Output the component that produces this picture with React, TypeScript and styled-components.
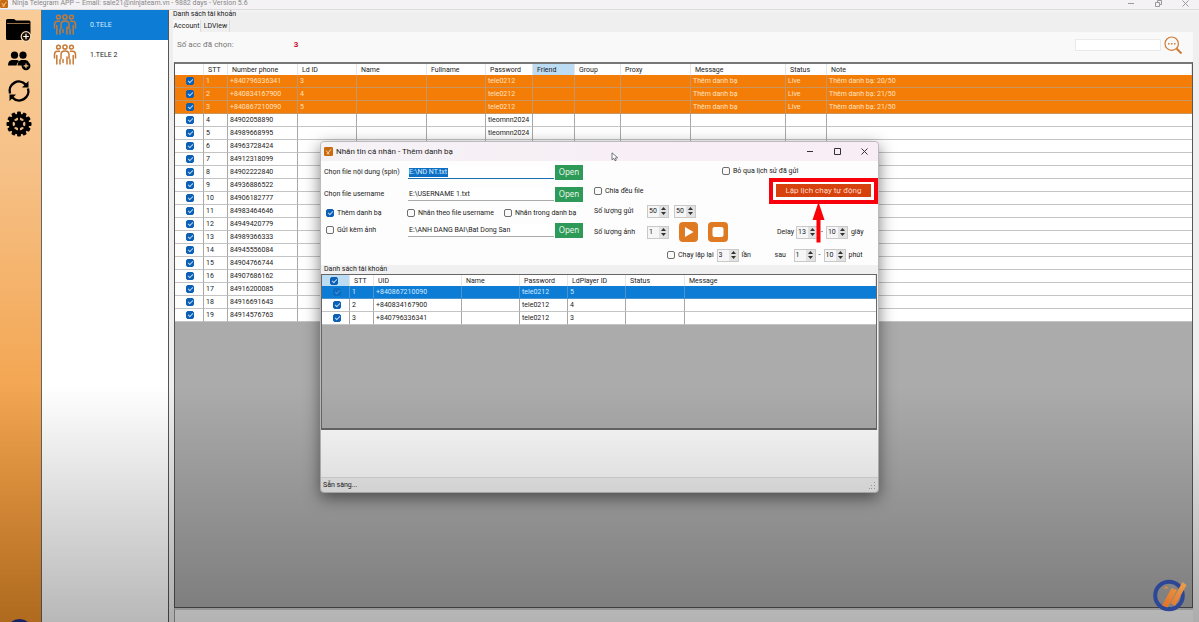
import React from "react";
import styled, { createGlobalStyle, css } from "styled-components";

const GlobalStyle = createGlobalStyle`
  * { box-sizing: border-box; }
  html, body, #root { height: 100%; }
  body {
    margin: 0;
    overflow: hidden;
    font: 7px/10px Roboto, "Liberation Sans", sans-serif;
    color: #222;
    background: #efefef;
  }
  button, input { font: inherit; color: inherit; margin: 0; padding: 0; border: 0; }
  button { background: none; cursor: pointer; }
  svg { display: block; }
`;

/* ---------- shared controls ---------- */

const Tick = styled.input.attrs({ type: "checkbox" })<{ $dim?: boolean }>`
  appearance: none;
  position: relative;
  display: block;
  flex: none;
  width: 8px;
  height: 8px;
  border: 1px solid #6e6e6e;
  border-radius: 2px;
  background: #fafafa;

  &:checked {
    background: ${(p) => (p.$dim ? "#0c6cc0" : "#0b5fb4")};
    border-color: ${(p) => (p.$dim ? "#0c6cc0" : "#0b5fb4")};
  }
  &:checked::after {
    content: "";
    position: absolute;
    left: 1px;
    top: 1px;
    width: 4px;
    height: 2px;
    border-left: 1px solid ${(p) => (p.$dim ? "#3f93d8" : "#b5d5f0")};
    border-bottom: 1px solid ${(p) => (p.$dim ? "#3f93d8" : "#b5d5f0")};
    transform: rotate(-45deg);
  }
`;

const CheckLabel = styled.label<{ $indent?: boolean }>`
  display: flex;
  align-items: center;
  gap: 3px;
  padding-left: ${(p) => (p.$indent ? 2 : 0)}px;
  white-space: nowrap;
`;

const SpinBox = styled.span`
  display: flex;
  width: 22px;
  height: 13px;
  border: 1px solid #c9c9c9;
  background: #f6f6f6;
`;

const SpinInput = styled.input.attrs({ type: "number" })`
  appearance: textfield;
  flex: 1;
  min-width: 0;
  width: 10px;
  padding-left: 1px;
  background: transparent;
  &::-webkit-inner-spin-button { appearance: none; margin: 0; }
`;

const SpinButtons = styled.span`
  display: flex;
  flex-direction: column;
  width: 9px;
  background: #e2e2e2;
`;

const SpinButton = styled.button.attrs({ type: "button" })`
  flex: 1;
  display: grid;
  place-items: center;
`;

function Spinner({ value, label }: { value: number; label: string }) {
  return (
    <SpinBox>
      <SpinInput defaultValue={value} aria-label={label} />
      <SpinButtons>
        <SpinButton aria-label="Tăng">
          <svg width="5" height="3" viewBox="0 0 5 3"><path d="M2.5 0 5 3H0z" fill="#333" /></svg>
        </SpinButton>
        <SpinButton aria-label="Giảm">
          <svg width="5" height="3" viewBox="0 0 5 3"><path d="M2.5 3 0 0h5z" fill="#333" /></svg>
        </SpinButton>
      </SpinButtons>
    </SpinBox>
  );
}

/* ---------- drawings ---------- */

const AppIcon = ({ size }: { size: number }) => (
  <svg width={size} height={size} viewBox="0 0 10 10">
    <rect width="10" height="10" rx="1.5" fill="#c86a12" />
    <path d="M2.300 4 4.600 6.600 7.800 2.600M3 7.500h3" stroke="#ffdca8" strokeWidth="1.100" fill="none" />
  </svg>
);

const FolderIcon = () => (
  <svg width="26" height="25" viewBox="0 0 26 25">
    <path d="M0 2.500Q0 1 1.500 1H8l2 1.500h13q1.500 0 1.500 1.500v16.500q0 1.500-1.500 1.500H1.500Q0 22 0 20.500z" fill="#000" />
    <path d="M1 5.500h22.500" stroke="#a87c4c" strokeWidth=".9" />
    <circle cx="20" cy="18.500" r="4.800" fill="#1a1006" stroke="#f6dcb8" strokeWidth="1.200" />
    <path d="M20 15.700v5.600M17.200 18.500h5.600" stroke="#fff" strokeWidth="1.200" />
  </svg>
);

const PeopleIcon = () => (
  <svg width="23" height="20" viewBox="0 0 23 20">
    <circle cx="6.500" cy="4.200" r="3.600" />
    <circle cx="15" cy="4.200" r="3.600" />
    <path d="M0 14.500Q0 9.200 4 8.900h5q1.500.3 2 1.500-2.300 1.600-2.500 4.100z" />
    <path d="M9.500 14.500q.3-5 4-5.600h4q2.500.3 3.300 2.300-5.300-.8-6.300 3.300z" />
    <circle cx="18" cy="14.800" r="4.400" />
    <path d="M18 12.400v4.800M15.600 14.800h4.800" stroke="#f6c78e" strokeWidth="1.200" />
  </svg>
);

const RefreshIcon = () => (
  <svg width="24" height="24" viewBox="0 0 24 24" fill="none" stroke="#000" strokeWidth="2.400">
    <path d="M3 14.500A9.300 9.300 0 0 1 18.500 5.300M21 9.500a9.300 9.300 0 0 1-15.500 9.200" />
    <path d="M21.500 2v6.500h-6.500zM2.500 22v-6.500h6.500z" fill="#000" stroke="none" />
  </svg>
);

const GearIcon = () => (
  <svg width="26" height="26" viewBox="-13 -13 26 26">
    {[0, 30, 60, 90, 120, 150].map((a) => (
      <rect key={a} x="-1.900" y="-12.500" width="3.800" height="25" rx="1" transform={`rotate(${a})`} />
    ))}
    <circle r="10.300" />
    <circle r="5.200" fill="none" stroke="#e8b880" strokeWidth="2.400" />
    {[0, 60, 120].map((a) => (
      <path key={a} d="M0-8V8" stroke="#000" strokeWidth="2" transform={`rotate(${a})`} />
    ))}
    <circle r="2.200" />
  </svg>
);

const TeamIcon = () => (
  <svg width="24" height="22" viewBox="0 0 24 22" fill="none" stroke="#c77a35" strokeWidth="1.500" strokeLinecap="round">
    <circle cx="5.500" cy="3.200" r="1.900" />
    <circle cx="12" cy="3" r="2.100" />
    <circle cx="18.500" cy="3.200" r="1.900" />
    <path d="M1.500 14v-3.500Q1.500 7.300 4.500 7.300h2M3.800 11.500v8.500M7 15.500v4.500M22.500 14v-3.500q0-3.200-3-3.200h-2M20.200 11.500v8.500M17 15.500v4.500" />
    <path d="M8 14.500v-4Q8 7 12 7t4 3.500v4M10 15.500v3M14 13v7" />
  </svg>
);

const SearchIcon = () => (
  <svg width="19" height="19" viewBox="0 0 19 19" fill="none" stroke="#cf7a35">
    <circle cx="7.700" cy="7.700" r="6.700" strokeWidth="1.200" />
    <path d="m12.500 12.500 5 5" strokeWidth="2" />
    <path d="M4 7.700h1.500M7 7.700h1.500M10 7.700h1.500" strokeWidth="1.500" />
  </svg>
);

const NinjaLogo = () => (
  <svg width="34" height="33" viewBox="0 0 34 33">
    <defs>
      <linearGradient id="blade" x1="0" y1="1" x2="1" y2="0">
        <stop offset="0" stopColor="#e07028" />
        <stop offset="1" stopColor="#eba04e" />
      </linearGradient>
    </defs>
    <circle cx="16" cy="16.500" r="13.800" fill="none" stroke="#2d4796" strokeWidth="4" />
    <path d="m9 26.500 9.500-17.500 5.500 2-9.500 17.500zM17.500 24 29.500 3l4 3-11.500 21z" fill="url(#blade)" />
    <path d="m10.500 9.500 3-2.500 2 2.500z" fill="#e58a3c" />
  </svg>
);

/* ---------- main window ---------- */

const Shell = styled.div`
  position: relative;
  height: 100%;
  display: flex;
  flex-direction: column;
`;

const TitleBar = styled.header`
  flex: none;
  display: flex;
  align-items: flex-start;
  gap: 4px;
  height: 10px;
  overflow: hidden;
  background: #f4f2f4;
  border-bottom: 1px solid #dcdcdc;
  color: #8a8888;
  line-height: 7px;
`;

const WindowButtons = styled.div<{ $muted?: boolean }>`
  display: flex;
  align-items: center;
  gap: 20px;
  margin-left: auto;
  padding-right: 10px;
  color: ${(p) => (p.$muted ? "#999" : "#333")};
`;

function WindowControls({ maximised }: { maximised?: boolean }) {
  return (
    <WindowButtons $muted={maximised}>
      <button type="button" aria-label="Thu nhỏ"><svg width="7" height="7" viewBox="0 0 7 7" stroke="currentColor"><path d="M0 3.500h6" /></svg></button>
      <button type="button" aria-label="Phóng to">
        <svg width="7" height="7" viewBox="0 0 7 7" fill="none" stroke="currentColor">
          <path d={maximised ? "M.5 2.500h4v4h-4zM2.500 2.500v-2h4v4h-2" : "M.5.5h6v6h-6z"} />
        </svg>
      </button>
      <button type="button" aria-label="Đóng"><svg width="7" height="7" viewBox="0 0 7 7" stroke="currentColor"><path d="m.5.5 6 6M6.500.5l-6 6" /></svg></button>
    </WindowButtons>
  );
}

const Body = styled.div`
  flex: 1;
  min-height: 0;
  display: flex;
`;

const Rail = styled.nav`
  position: relative;
  width: 41px;
  flex: none;
  overflow: hidden;
  padding: 8px 0 0 6px;
  display: flex;
  flex-direction: column;
  align-items: flex-start;
  gap: 8px;
  background: linear-gradient(#f8cc98, #f6c188 25%, #f3a652 62%, #f2932a);
`;

const RailButton = styled.button`
  width: 26px;
  display: grid;
  place-items: center;
`;

const RailBadge = styled.span`
  position: absolute;
  left: 6px;
  bottom: -24px;
  width: 27px;
  height: 27px;
  border-radius: 50%;
  background: #21308c;
`;

const Groups = styled.div`
  width: 128px;
  flex: none;
  border-left: 1px solid #666;
  border-right: 1px solid #555;
  background: #fff;
`;

const Group = styled.button<{ $active?: boolean }>`
  display: flex;
  align-items: center;
  gap: 13px;
  width: 100%;
  height: 30px;
  padding-left: 11px;
  text-align: left;
  background: ${(p) => (p.$active ? "#0c7cd5" : "#fff")};
  color: ${(p) => (p.$active ? "#d8ecff" : "#222")};
`;

const Workspace = styled.main`
  flex: 1;
  min-width: 0;
  display: flex;
  flex-direction: column;
  padding: 0 6px 0 4px;
  border-top: 2px solid #f2f2f2;
`;

const Tabs = styled.div`
  display: flex;
  height: 12px;
`;

const Tab = styled.button<{ $active?: boolean }>`
  width: ${(p) => (p.$active ? 28 : 28)}px;
  margin-right: 1px;
  background: ${(p) => (p.$active ? "#f9f9f9" : "#f0f0f0")};
  border-right: 1px solid #ddd;
`;

const SectionTitle = styled.div`
  height: 8px;
  line-height: 5px;
`;

const Toolbar = styled.div`
  display: flex;
  align-items: center;
  height: 30px;
  padding: 0 10px 4px 4px;
  font-size: 8px;
  color: #777;
  background: #f9f9f9;
`;

const Count = styled.strong`
  margin-left: 60px;
  color: #c8102e;
`;

const SearchBox = styled.input`
  width: 86px;
  height: 12px;
  margin: 0 3px 0 auto;
  background: #fff;
  border: 1px solid #eaeaea;
`;

const GridPane = styled.section`
  flex: 1;
  min-height: 0;
  margin-left: 1px;
  overflow: hidden;
  border: 1px solid #555;
  border-top-width: 2px;
  border-top-color: #777;
  background: #ababab;
`;

const BottomPane = styled.div`
  height: 14px;
  flex: none;
  margin-left: 1px;
  border-left: 1px solid #999;
  border-top: 2px solid #ccc;
  background: #f8f8f8;
`;

const Table = styled.table`
  width: 100%;
  table-layout: fixed;
  border-collapse: separate;
  border-spacing: 0;
  background: #fff;
`;

const cell = css`
  overflow: hidden;
  white-space: nowrap;
  text-align: left;
  border-right: 1px solid #a8a8a8;
`;

const Th = styled.th<{ $lit?: boolean }>`
  ${cell}
  height: 11px;
  padding: 0 0 0 4px;
  font-weight: 400;
  border-right-color: #e6e6e6;
  background: ${(p) => (p.$lit ? "#bcdcf4" : "#fff")};
`;

const Td = styled.td`
  ${cell}
  height: 13px;
  padding: 0 0 0 2px;
  border-bottom: 1px solid #c4c4c4;
  &:last-child { border-right: 0; }
`;

const Row = styled.tr<{ $tone?: "orange" | "blue" }>`
  ${(p) =>
    p.$tone &&
    css`
      color: ${p.$tone === "orange" ? "#ffe2c0" : "#d5eaff"};
      background: ${p.$tone === "orange" ? "#f47d07" : "#0c7cd5"};
      td { border-color: ${p.$tone === "orange" ? "#c99560" : "#4b93cf"}; }
    `}
`;

const TickCell = styled.div<{ $inset?: number }>`
  padding-left: ${(p) => p.$inset ?? 9}px;
`;

const mainColumns = ["", "STT", "Number phone", "Ld ID", "Name", "Fullname", "Password", "Friend", "Group", "Proxy", "Message", "Status", "Note"];
const mainWidths = [29, 24, 70, 59, 70, 59, 47, 42, 46, 70, 95, 41];

const active = [
  ["+840796336341", "3", "20/50"],
  ["+840834167900", "4", "21/50"],
  ["+840867210090", "5", "21/50"],
].map(([phone, ld, done]) => [phone, ld, "", "", "tele0212", "", "", "", "Thêm danh bạ", "Live", `Thêm danh bạ: ${done}`]);

const idle = [
  "84902058890", "84989668995", "84963728424", "84912318099", "84902222840", "84936886522",
  "84906182777", "84983464646", "84949420779", "84989366333", "84945556084", "84904766744",
  "84907686162", "84916200085", "84916691643", "84914576763",
].map((phone, i) => [phone, "", "", "", i < 2 ? "tleomnn2024" : "", "", "", "", "", "", ""]);

function Accounts() {
  return (
    <Table>
      <colgroup>
        {mainWidths.map((w, i) => <col key={i} width={w} />)}
        <col />
      </colgroup>
      <thead>
        <tr>{mainColumns.map((c) => <Th key={c} $lit={c === "Friend"}>{c}</Th>)}</tr>
      </thead>
      <tbody>
        {[...active, ...idle].map((row, i) => (
          <Row key={row[0]} $tone={i < 3 ? "orange" : undefined}>
            <Td><TickCell><Tick defaultChecked aria-label={row[0]} /></TickCell></Td>
            <Td>{i + 1}</Td>
            {row.map((v, j) => <Td key={j}>{v}</Td>)}
          </Row>
        ))}
      </tbody>
    </Table>
  );
}

/* ---------- message dialog ---------- */

const Dialog = styled.div`
  position: absolute;
  left: 320px;
  top: 141px;
  width: 559px;
  height: 352px;
  display: flex;
  flex-direction: column;
  border: 1px solid #bbb;
  border-radius: 4px;
  background: #f0f0f0;
  box-shadow: 0 5px 16px rgba(0, 0, 0, 0.5);
`;

const DialogTitle = styled.div`
  flex: none;
  display: flex;
  align-items: center;
  gap: 3px;
  height: 19px;
  padding-left: 3px;
  border-radius: 4px 4px 0 0;
  font-size: 8px;
  background: linear-gradient(90deg, #f5f2f6, #f9edf5);
`;

const Form = styled.form`
  flex: none;
  display: flex;
  height: 104px;
  padding-left: 3px;
  background: #fdfdfd;
`;

const FileGrid = styled.div`
  display: grid;
  grid-template-columns: 83px 146px 28px;
  grid-template-rows: 22px 22px 16px 18px;
  column-gap: 1px;
  align-items: center;
  width: 270px;
`;

const PathInput = styled.input<{ $focused?: boolean }>`
  height: 13px;
  width: 100%;
  padding-left: 1px;
  border-bottom: 1px solid ${(p) => (p.$focused ? "#1a6fae" : "#aaa")};
`;

const FocusedPath = styled.div`
  position: relative;
`;

const Selection = styled.span`
  position: absolute;
  left: 1px;
  top: 2px;
  padding-right: 1px;
  line-height: 9px;
  color: #d8ecff;
  background: #0c6fc4;
`;

const OpenButton = styled.button.attrs({ type: "button" })`
  height: 15px;
  font-family: "Noto Sans", sans-serif;
  font-size: 8px;
  color: #e4f5ea;
  background: #2e9a57;
`;

const CheckRow = styled.div`
  grid-column: 1 / -1;
  display: grid;
  grid-template-columns: 81px 97px auto;
  padding-left: 2px;
`;

const Options = styled.div`
  flex: 1;
  display: grid;
  grid-template-rows: 20px 20px 20px 22px 24px;
`;

const Line = styled.div`
  display: flex;
  align-items: center;
  gap: 5px;
`;

const LineLabel = styled.span`
  width: 48px;
`;

const Tail = styled.div<{ $w: number }>`
  display: flex;
  align-items: center;
  gap: 3px;
  width: ${(p) => p.$w}px;
  margin-left: auto;
`;

const DelayLabel = styled.span`
  width: 16px;
`;

const Repeat = styled.span`
  width: 30px;
`;

const IconButton = styled.button.attrs({ type: "button" })`
  margin-left: 5px;
`;

const Schedule = styled.button.attrs({ type: "button" })`
  width: 109px;
  height: 26px;
  margin-left: auto;
  border: 4px solid #f8000c;
  padding: 2px 3px 3px;
  background: #fff;
`;

const ScheduleFace = styled.span`
  display: block;
  height: 13px;
  line-height: 13px;
  font-size: 8px;
  color: #ffdcc8;
  background: #d6410d;
`;

const Arrow = styled.svg`
  position: absolute;
  left: 490px;
  top: 60px;
`;

const Pointer = styled.svg`
  position: absolute;
  left: 290px;
  top: 10px;
`;

const DialogSection = styled.div`
  flex: none;
  height: 9px;
  padding-left: 3px;
  line-height: 8px;
`;

const DialogPane = styled.div`
  height: 156px;
  flex: none;
  margin-right: 1px;
  border: 1px solid #666;
  border-bottom-width: 2px;
  background: #ababab;
`;

const Log = styled.div`
  flex: 1;
  background: #fcfcfc;
  border-bottom: 1px solid #ddd;
`;

const StatusBar = styled.footer`
  display: flex;
  align-items: center;
  justify-content: space-between;
  height: 14px;
  padding: 0 2px;
`;

const dialogColumns = ["STT", "UID", "Name", "Password", "LdPlayer ID", "Status", "Message"];
const dialogWidths = [28, 24, 88, 58, 48, 58, 59];
const uids = [["+840867210090", "5"], ["+840834167900", "4"], ["+840796336341", "3"]];

function Recipients() {
  return (
    <Table>
      <colgroup>
        {dialogWidths.map((w, i) => <col key={i} width={w} />)}
        <col />
      </colgroup>
      <thead>
        <tr>
          <Th $lit><TickCell $inset={4}><Tick defaultChecked aria-label="Chọn tất cả" /></TickCell></Th>
          {dialogColumns.map((c) => <Th key={c}>{c}</Th>)}
        </tr>
      </thead>
      <tbody>
        {uids.map(([uid, ld], i) => (
          <Row key={uid} $tone={i === 0 ? "blue" : undefined}>
            <Td><TickCell><Tick $dim={i === 0} defaultChecked aria-label={uid} /></TickCell></Td>
            {[i + 1, uid, "", "tele0212", ld, "", ""].map((v, j) => <Td key={j}>{v}</Td>)}
          </Row>
        ))}
      </tbody>
    </Table>
  );
}

function MessageDialog() {
  return (
    <Dialog role="dialog" aria-label="Nhắn tin cá nhân">
      <DialogTitle>
        <AppIcon size={9} />
        Nhắn tin cá nhân - Thêm danh bạ
        <WindowControls />
      </DialogTitle>
      <Form onSubmit={(e) => e.preventDefault()}>
        <FileGrid>
          <label htmlFor="content">Chọn file nội dung (spin)</label>
          <FocusedPath>
            <PathInput id="content" $focused />
            <Selection>E:\ND NT.txt</Selection>
          </FocusedPath>
          <OpenButton>Open</OpenButton>
          <label htmlFor="username">Chọn file username</label>
          <PathInput id="username" defaultValue="E:\USERNAME 1.txt" />
          <OpenButton>Open</OpenButton>
          <CheckRow>
            <CheckLabel><Tick defaultChecked />Thêm danh bạ</CheckLabel>
            <CheckLabel><Tick />Nhắn theo file username</CheckLabel>
            <CheckLabel><Tick />Nhắn trong danh bạ</CheckLabel>
          </CheckRow>
          <CheckLabel $indent><Tick />Gửi kèm ảnh</CheckLabel>
          <PathInput aria-label="Thư mục ảnh" defaultValue="E:\ANH DANG BAI\Bat Dong San" />
          <OpenButton>Open</OpenButton>
        </FileGrid>
        <Options>
          <Line>
            <Tail $w={156}><CheckLabel><Tick />Bỏ qua lịch sử đã gửi</CheckLabel></Tail>
          </Line>
          <Line>
            <CheckLabel><Tick />Chia đều file</CheckLabel>
            <Schedule><ScheduleFace>Lập lịch chạy tự động</ScheduleFace></Schedule>
          </Line>
          <Line>
            <LineLabel>Số lượng gửi</LineLabel>
            <Spinner value={50} label="Số lượng gửi từ" />
            <Spinner value={50} label="Số lượng gửi đến" />
          </Line>
          <Line>
            <LineLabel>Số lượng ảnh</LineLabel>
            <Spinner value={1} label="Số lượng ảnh" />
            <IconButton aria-label="Chạy">
              <svg width="19" height="20" viewBox="0 0 19 20"><rect width="19" height="20" rx="4" fill="#df7a22" /><path d="M6 5v10l8.500-5z" fill="#fff" /></svg>
            </IconButton>
            <IconButton aria-label="Dừng">
              <svg width="20" height="20" viewBox="0 0 20 20"><rect width="20" height="20" rx="4" fill="#df7a22" /><rect x="4.500" y="5" width="11" height="10" rx="2" fill="#fff" /></svg>
            </IconButton>
            <Tail $w={101}>
              <DelayLabel>Delay</DelayLabel>
              <Spinner value={13} label="Delay từ" />-<Spinner value={10} label="Delay đến" />giây
            </Tail>
          </Line>
          <Line>
            <Tail $w={211}>
              <CheckLabel><Tick />Chạy lặp lại</CheckLabel>
              <Spinner value={3} label="Số lần lặp" />
              <Repeat>lần</Repeat>
              <DelayLabel>sau</DelayLabel>
              <Spinner value={1} label="Sau từ" />-<Spinner value={10} label="Sau đến" />phút
            </Tail>
          </Line>
        </Options>
      </Form>
      <DialogSection>Danh sách tài khoản</DialogSection>
      <DialogPane><Recipients /></DialogPane>
      <Log />
      <StatusBar>
        Sẵn sàng...
        <svg width="7" height="7" viewBox="0 0 7 7" fill="#aaa"><path d="M5 0h1v1H5zM5 3h1v1H5zM5 6h1v1H5zM2 3h1v1H2zM2 6h1v1H2zM0 6h1v1H0z" /></svg>
      </StatusBar>
      <Arrow width="14" height="42" viewBox="0 0 14 42">
        <path d="M7.500 0l6 18H9.500v22.500H5.500V18h-4z" fill="#fb0007" />
      </Arrow>
      <Pointer width="8" height="10" viewBox="0 0 8 10">
        <path d="M1 .8v7l1.800-1.500L4 8.800l1.300-.6L4.300 6l2.400-.2z" fill="#fff" stroke="#555" strokeWidth=".8" />
      </Pointer>
    </Dialog>
  );
}

const Fade = styled.div`
  position: absolute;
  inset: 0;
  pointer-events: none;
  background: linear-gradient(transparent 62%, rgba(0, 0, 0, 0.28));
`;

const Watermark = styled.div`
  position: absolute;
  right: 12px;
  bottom: 10px;
`;

export default function App() {
  return (
    <Shell>
      <GlobalStyle />
      <TitleBar>
        <AppIcon size={8} />
        Ninja Telegram APP – Email: sale21@ninjateam.vn - 9882 days - Version 5.6
        <WindowControls maximised />
      </TitleBar>
      <Body>
        <Rail>
          <RailButton aria-label="Thêm thư mục"><FolderIcon /></RailButton>
          <RailButton aria-label="Thêm tài khoản"><PeopleIcon /></RailButton>
          <RailButton aria-label="Làm mới"><RefreshIcon /></RailButton>
          <RailButton aria-label="Cài đặt"><GearIcon /></RailButton>
          <RailBadge />
        </Rail>
        <Groups>
          <Group $active><TeamIcon />0.TELE</Group>
          <Group><TeamIcon />1.TELE 2</Group>
        </Groups>
        <Workspace>
          <SectionTitle>Danh sách tài khoản</SectionTitle>
          <Tabs>
            <Tab $active>Account</Tab>
            <Tab>LDView</Tab>
          </Tabs>
          <Toolbar>
            Số acc đã chọn:
            <Count>3</Count>
            <SearchBox aria-label="Tìm kiếm" />
            <button aria-label="Tìm"><SearchIcon /></button>
          </Toolbar>
          <GridPane><Accounts /></GridPane>
          <BottomPane />
        </Workspace>
      </Body>
      <MessageDialog />
      <Fade />
      <Watermark><NinjaLogo /></Watermark>
    </Shell>
  );
}
